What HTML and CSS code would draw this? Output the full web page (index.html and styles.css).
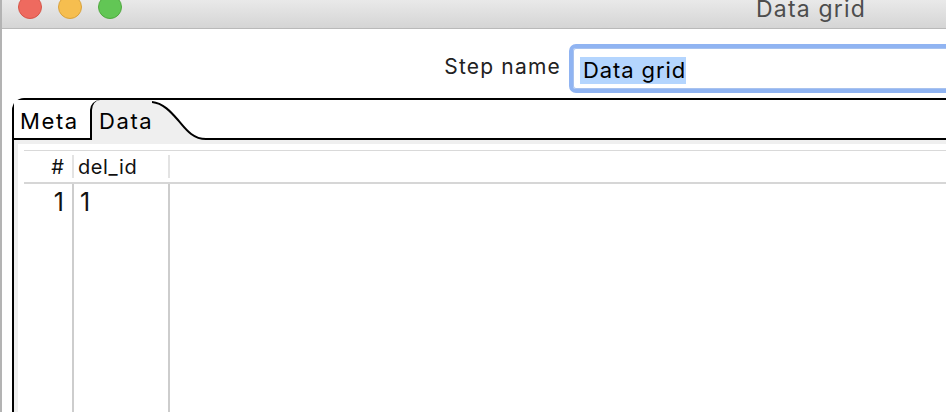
FILE: index.html
```html
<!DOCTYPE html>
<html>
<head>
<meta charset="utf-8">
<link rel="stylesheet" href="styles.css">
</head>
<body>
<div class="window">
  <div class="titlebar">
    <div class="lights">
      <span class="light red"></span>
      <span class="light yellow"></span>
      <span class="light green"></span>
    </div>
    <div class="title">Data grid</div>
  </div>
  <div class="form-row">
    <label class="label">Step name</label>
    <div class="input"><span class="sel">Data grid</span></div>
  </div>
  <div class="panel">
    <div class="tabstrip">
      <div class="tab tab-meta">Meta</div>
      <div class="tab tab-data">Data</div>
      <svg class="tab-curve" width="54" height="40" viewBox="0 0 54 40">
        <path d="M0 2 C11 3 19 12 26 20 S40 39 54 39 L54 40 L0 40 Z" fill="#efefef"/>
        <path d="M0 2 C11 3 19 12 26 20 S40 39 54 39" fill="none" stroke="#000" stroke-width="2"/>
      </svg>
      <div class="tab-fill"></div>
    </div>
    <div class="panel-body">
      <div class="grid">
        <div class="thead">
          <div class="cell c1">#</div>
          <div class="hsep"></div>
          <div class="cell c2">del_id</div>
          <div class="hsep"></div>
          <div class="cell c3"></div>
        </div>
        <div class="tbody">
          <div class="col c1"><div class="bcell num">1</div></div>
          <div class="col c2"><div class="bcell">1</div></div>
          <div class="col c3"></div>
        </div>
      </div>
    </div>
  </div>
</div>
</body>
</html>
```
FILE: styles.css
```css
html, body {
  margin: 0;
  padding: 0;
  width: 946px;
  height: 412px;
  overflow: hidden;
  background: #ffffff;
  font-family: Inter, "Noto Sans", sans-serif;
  color: #111;
}

.window {
  height: 412px;
  border-left: 2px solid #b3b3b3;
  box-sizing: border-box;
  overflow: hidden;
}

.titlebar {
  height: 28px;
  border-bottom: 1px solid #b9b9b9;
  background: linear-gradient(#e9e9e9, #d5d5d5);
  display: flex;
  align-items: flex-start;
  overflow: hidden;
}

.lights {
  display: flex;
  gap: 16px;
  padding-left: 16px;
  margin-top: -5px;
}

.light {
  width: 22px;
  height: 22px;
  border-radius: 50%;
  border: 1px solid;
}
.red { background: #ee6a5f; border-color: #d65548; }
.yellow { background: #f6be4f; border-color: #d9a23c; }
.green { background: #62c655; border-color: #50a83f; }

.title {
  margin-left: 634px;
  margin-top: -2px;
  font-size: 23px;
  line-height: 23px;
  letter-spacing: 1.2px;
  color: #4d4d4d;
  white-space: nowrap;
}

.form-row {
  display: flex;
  align-items: center;
  margin-top: 15px;
  height: 49px;
}

.label {
  flex: none;
  width: 559px;
  text-align: right;
  font-size: 21px;
  letter-spacing: 1.2px;
  color: #222;
  margin-top: -5px;
}

.input {
  margin-left: 8px;
  width: 420px;
  flex: none;
  height: 49px;
  box-sizing: border-box;
  border: 4px solid #90b4f2;
  border-radius: 7px;
  box-shadow: inset 0 0 0 1px #a8c2ee;
  padding: 9px 0 0 7px;
  background: #fff;
}

.sel {
  display: inline-block;
  background: #b4d5fe;
  font-size: 22px;
  line-height: 27px;
  height: 27px;
  letter-spacing: 0.9px;
  padding: 0 0 0 3px;
  color: #000;
}

.panel {
  margin-top: 5px;
  margin-left: 10px;
  width: 1000px;
  border-top: 2px solid #000;
  border-left: 2px solid #000;
  border-top-left-radius: 12px;
  height: 400px;
}

.tabstrip {
  display: flex;
  height: 40px;
}

.tab {
  box-sizing: border-box;
  height: 40px;
  font-size: 22px;
  letter-spacing: 1.6px;
  color: #000;
  padding-top: 5px;
  line-height: 33px;
  white-space: nowrap;
}

.tab-meta {
  width: 76px;
  padding-left: 6px;
  border-bottom: 2px solid #000;
  background: #fff;
}

.tab-data {
  width: 62px;
  padding-left: 7px;
  background: #efefef;
  border-left: 2px solid #000;
  border-top-left-radius: 10px;
}

.tab-curve {
  display: block;
  flex: none;
}

.tab-fill {
  flex: 1;
  border-bottom: 2px solid #000;
}

.panel-body {
  background: #efefef;
  padding: 4px 0 0 4px;
  height: 360px;
}

.grid {
  background: #fff;
  padding: 6px 0 0 6px;
  height: 360px;
}

.thead {
  display: flex;
  height: 31px;
  border-top: 1px solid #d9d9d9;
  border-bottom: 2px solid #d6d6d6;
}

.cell {
  font-size: 20px;
  line-height: 31px;
  letter-spacing: 0.6px;
  color: #111;
  padding-top: 1px;
}

.c1 { width: 48px; flex: none; box-sizing: border-box; }
.c2 { width: 94px; flex: none; box-sizing: border-box; }
.c3 { flex: 1; }

.cell.c1 { text-align: right; padding-right: 8px; letter-spacing: 0; }
.cell.c2 { padding-left: 4px; }

.hsep {
  width: 2px;
  margin: 4px 0;
  background: #e3e3e3;
}

.tbody {
  display: flex;
  height: 300px;
}

.col.c1, .col.c2 {
  border-right: 2px solid #cdcdcd;
  box-sizing: content-box;
}

.bcell {
  font-size: 25px;
  line-height: 36px;
  color: #111;
}

.bcell.num {
  text-align: right;
  padding-right: 8px;
}

.col.c2 .bcell {
  padding-left: 6px;
}
```
